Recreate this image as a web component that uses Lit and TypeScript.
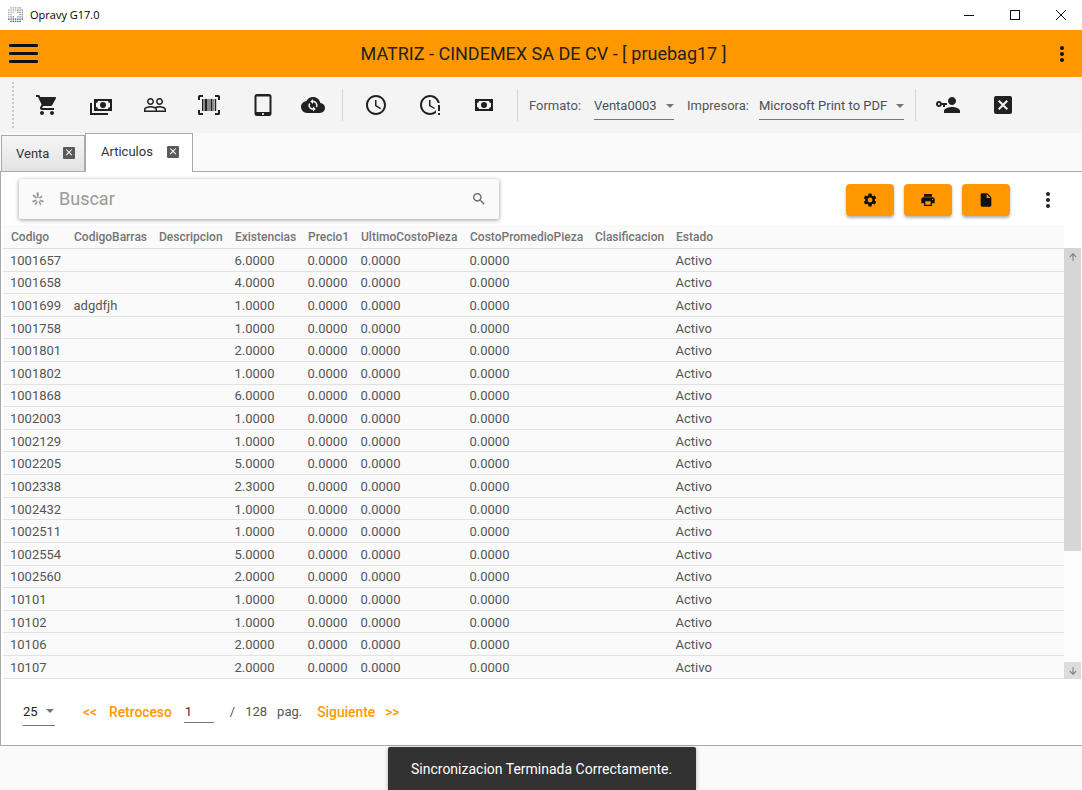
import { LitElement, html, css, svg } from "lit";
import { customElement } from "lit/decorators.js";

const P = {
  cart: "M7 18c-1.1 0-1.99.9-1.99 2S5.9 22 7 22s2-.9 2-2-.9-2-2-2zM1 2v2h2l3.6 7.59-1.35 2.45c-.16.28-.25.61-.25.96 0 1.1.9 2 2 2h12v-2H7.42c-.14 0-.25-.11-.25-.25l.03-.12.9-1.63h7.45c.75 0 1.41-.41 1.75-1.03l3.58-6.49c.08-.14.12-.31.12-.48 0-.55-.45-1-1-1H5.21l-.94-2H1zm16 16c-1.1 0-1.99.9-1.99 2s.89 2 1.99 2 2-.9 2-2-.9-2-2-2z",
  cashMulti: "M5,6H23V18H5V6M14,9A3,3 0 0,1 17,12A3,3 0 0,1 14,15A3,3 0 0,1 11,12A3,3 0 0,1 14,9M9,8A2,2 0 0,1 7,10V14A2,2 0 0,1 9,16H19A2,2 0 0,1 21,14V10A2,2 0 0,1 19,8H9M1,10H3V20H19V22H1V10Z",
  people: "M16.5 13c-1.2 0-3.07.34-4.5 1-1.43-.67-3.3-1-4.5-1C5.33 13 1 14.08 1 16.25V19h22v-2.75c0-2.17-4.33-3.25-6.5-3.25zm-4 4.5h-10v-1.25c0-.54 2.56-1.75 5-1.75s5 1.21 5 1.75v1.25zm9 0H14v-1.25c0-.46-.2-.86-.52-1.22.88-.3 1.96-.53 3.02-.53 2.44 0 5 1.21 5 1.75v1.25zM7.5 12c1.93 0 3.5-1.57 3.5-3.5S9.43 5 7.5 5 4 6.57 4 8.5 5.57 12 7.5 12zm0-5.5c1.1 0 2 .9 2 2s-.9 2-2 2-2-.9-2-2 .9-2 2-2zm9 5.5c1.93 0 3.5-1.57 3.5-3.5S18.43 5 16.5 5 13 6.57 13 8.5s1.57 3.5 3.5 3.5zm0-5.5c1.1 0 2 .9 2 2s-.9 2-2 2-2-.9-2-2 .9-2 2-2z",
  barcode: "M1 7V3.5A1.5 1.5 0 0 1 2.5 2H6v2H3v3H1zM18 2h3.5A1.5 1.5 0 0 1 23 3.5V7h-2V4h-3V2zM1 17h2v3h3v2H2.5A1.5 1.5 0 0 1 1 20.500V17zM21 17h2v3.500A1.500 1.500 0 0 1 21.500 22H18v-2h3v-3zM5 6h1.500v12H5zM7.500 6h3v12h-3zM11.500 6h1v12h-1zM13.500 6h2v12h-2zM16.500 6h.800v12h-.800zM18 6h1.200v12H18z",
  tablet: "M6 1h12a2.500 2.500 0 0 1 2.500 2.500v17A2.500 2.500 0 0 1 18 23H6a2.500 2.500 0 0 1-2.500-2.500v-17A2.500 2.500 0 0 1 6 1zM5.500 3.500v15.500h13V3.500zM12 19.900a1.100 1.100 0 1 0 0 2.200 1.100 1.100 0 0 0 0-2.200z",
  cloud: "M12 4c3.640 0 6.670 2.590 7.350 6.040C21.950 10.220 24 12.360 24 15a5 5 0 0 1-5 5H6a6 6 0 0 1-6-6c0-3.090 2.340-5.640 5.350-5.960C6.600 5.640 9.110 4 12 4z",
  sync: "M12 7.800V6l-2.700 2.500L12 11V9.300c1.700 0 3.100 1.300 3.100 3 0 .5-.1.900-.3 1.300l1.100 1c.4-.7.7-1.500.7-2.300 0-2.500-2.100-4.500-4.600-4.500zM12 15.300c-1.700 0-3.100-1.300-3.100-3 0-.5.100-.9.300-1.300l-1.100-1c-.4.700-.7 1.500-.7 2.300 0 2.500 2.100 4.500 4.600 4.500V18.500l2.700-2.500-2.700-2.500v1.800z",
  clock: "M11.99 2C6.470 2 2 6.480 2 12s4.470 10 9.990 10C17.520 22 22 17.520 22 12S17.520 2 11.990 2zM12 20c-4.420 0-8-3.580-8-8s3.580-8 8-8 8 3.580 8 8-3.580 8-8 8zm.5-13H11v6l5.250 3.150.75-1.230-4.500-2.670z",
  clockAlert: "M11,7V13L16.200,16.100L17,14.900L12.500,12.200V7H11M20,12V18H22V12H20M20,20V22H22V20H20M18,20C16.300,21.300 14.300,22 12,22C6.500,22 2,17.500 2,12C2,6.500 6.500,2 12,2C16.800,2 20.900,5.400 21.800,10H19.700C18.800,6.600 15.700,4 12,4C7.600,4 4,7.600 4,12C4,16.400 7.600,20 12,20C14.400,20 16.500,18.900 18,17.300V20Z",
  cash: "M3,6H21V18H3V6M12,9A3,3 0 0,1 15,12A3,3 0 0,1 12,15A3,3 0 0,1 9,12A3,3 0 0,1 12,9M7,8A2,2 0 0,1 5,10V14A2,2 0 0,1 7,16H17A2,2 0 0,1 19,14V10A2,2 0 0,1 17,8H7Z",
  key: "M11 10V12H9V14H7V12H5.800C5.400 13.200 4.300 14 3 14C1.300 14 0 12.700 0 11S1.300 8 3 8C4.300 8 5.400 8.800 5.800 10H11M3 10C2.400 10 2 10.400 2 11S2.400 12 3 12 4 11.600 4 11 3.600 10 3 10M16 14C18.700 14 24 15.300 24 18V20H8V18C8 15.300 13.300 14 16 14M16 12C13.800 12 12 10.200 12 8S13.800 4 16 4 20 5.800 20 8 18.200 12 16 12Z",
  closeBox: "M19,3H5A2,2 0 0,0 3,5V19A2,2 0 0,0 5,21H19A2,2 0 0,0 21,19V5A2,2 0 0,0 19,3M15.600,17L12,13.400L8.400,17L7,15.600L10.600,12L7,8.400L8.400,7L12,10.600L15.600,7L17,8.400L13.400,12L17,15.600L15.600,17Z",
  more: "M12 8c1.100 0 2-.9 2-2s-.9-2-2-2-2 .9-2 2 .9 2 2 2zm0 2c-1.100 0-2 .9-2 2s.9 2 2 2 2-.9 2-2-.9-2-2-2zm0 6c-1.100 0-2 .9-2 2s.9 2 2 2 2-.9 2-2-.9-2-2-2z",
  gear: "M19.140 12.940c.04-.3.06-.61.06-.94 0-.32-.02-.64-.07-.94l2.030-1.580c.18-.14.23-.41.12-.61l-1.920-3.320c-.12-.22-.37-.29-.59-.22l-2.390.96c-.5-.38-1.030-.7-1.620-.94l-.36-2.540c-.04-.24-.24-.41-.48-.41h-3.840c-.24 0-.43.17-.47.41l-.36 2.540c-.59.24-1.130.57-1.620.94l-2.390-.96c-.22-.08-.47 0-.59.22L2.740 8.870c-.12.21-.08.47.12.61l2.030 1.580c-.05.3-.09.63-.09.94s.02.64.07.94l-2.030 1.580c-.18.14-.23.41-.12.61l1.920 3.320c.12.22.37.29.59.22l2.390-.96c.5.38 1.030.7 1.620.94l.36 2.540c.05.24.24.41.48.41h3.840c.24 0 .44-.17.47-.41l.36-2.540c.59-.24 1.130-.56 1.620-.94l2.390.96c.22.08.47 0 .59-.22l1.920-3.320c.12-.22.07-.47-.12-.61l-2.010-1.580zM12 15.600c-1.980 0-3.600-1.620-3.600-3.600s1.620-3.600 3.600-3.600 3.600 1.620 3.600 3.600-1.620 3.600-3.600 3.600z",
  print: "M19 8H5c-1.660 0-3 1.340-3 3v6h4v4h12v-4h4v-6c0-1.660-1.340-3-3-3zm-3 11H8v-5h8v5zm3-7c-.55 0-1-.45-1-1s.45-1 1-1 1 .45 1 1-.45 1-1 1zm-1-9H6v4h12V3z",
  file: "M14 2H6c-1.100 0-1.990.9-1.990 2L4 20c0 1.100.89 2 1.990 2H18c1.100 0 2-.9 2-2V8l-6-6zm-1 7V3.500L18.500 9H13z",
  search: "M15.500 14h-.79l-.28-.27C15.410 12.590 16 11.110 16 9.500 16 5.910 13.090 3 9.500 3S3 5.910 3 9.500 5.910 16 9.500 16c1.610 0 3.090-.59 4.230-1.570l.27.28v.79l5 4.990L20.490 19l-4.990-5zm-6 0C7.010 14 5 11.990 5 9.500S7.010 5 9.500 5 14 7.010 14 9.500 11.990 14 9.500 14z",
  spark: "M9.500 1h4l-.5 9h-3zM2.500 6.500l2-2.500 5.500 5.500-1.500 2zM15 11.500l-1.500-2 5-3.500 1.500 2.500zM2 15l7-2 .7 2.500-6.500 3zM22 15l-.8 3.500-6.500-3 .8-2.500zM6 21l4-5.500 1.800 1.200-3 6zM13 16.700l1.800-1.200 3.200 5.500-2.500 2z",
  up: "M12 4l-7 7 1.500 1.500L11 8V20h2V8l4.500 4.500L19 11z",
  down: "M12 20l7-7-1.500-1.500L13 16V4h-2v12l-4.500-4.500L5 13z",
  x: "M18.300 5.710L16.890 4.300 12 9.170 7.110 4.300 5.700 5.710 10.590 10.600 5.700 15.500l1.410 1.400L12 12.030l4.890 4.870 1.410-1.400-4.890-4.900z",
};

const icon = (d: string, size = 24) => html`<svg class="i" width=${size} height=${size} viewBox="0 0 24 24" fill-rule="evenodd" fill="currentColor" aria-hidden="true">${svg`<path d=${d}></path>`}</svg>`;

const cloudIcon = html`<svg class="i" width="24" height="24" viewBox="0 0 24 24" fill-rule="evenodd" aria-hidden="true">${svg`<path fill="currentColor" d=${P.cloud}></path><path fill="#f5f5f5" d=${P.sync}></path>`}</svg>`;

const logoDots = () => {
  const dots = [];
  for (let r = 0; r < 7; r++) {
    for (let c = 0; c < 7; c++) {
      const dx = c - 3, dy = r - 3;
      const d = Math.sqrt(dx * dx + dy * dy);
      if (d > 3.7 || d < 1.4) continue;
      const col = r + c < 5 ? "#a9b4bd" : r > 4 ? "#5d7183" : "#8c9aa6";
      dots.push(svg`<circle cx=${1.6 + c * 2} cy=${1.6 + r * 2} r="0.750" fill=${col}></circle>`);
    }
  }
  return dots;
};

const COLS = ["Codigo", "CodigoBarras", "Descripcion", "Existencias", "Precio1", "UltimoCostoPieza", "CostoPromedioPieza", "Clasificacion", "Estado"];
const ROWS: [string, string, string][] = [
  ["1001657", "", "6.0000"], ["1001658", "", "4.0000"], ["1001699", "adgdfjh", "1.0000"], ["1001758", "", "1.0000"],
  ["1001801", "", "2.0000"], ["1001802", "", "1.0000"], ["1001868", "", "6.0000"], ["1002003", "", "1.0000"],
  ["1002129", "", "1.0000"], ["1002205", "", "5.0000"], ["1002338", "", "2.3000"], ["1002432", "", "1.0000"],
  ["1002511", "", "1.0000"], ["1002554", "", "5.0000"], ["1002560", "", "2.0000"], ["10101", "", "1.0000"],
  ["10102", "", "1.0000"], ["10106", "", "2.0000"], ["10107", "", "2.0000"],
];

@customElement("app-root")
export class AppRoot extends LitElement {
  static styles = css`
    :host { display: block; width: 1082px; height: 790px; overflow: hidden; position: relative; background: #fafafa; font-family: Roboto, sans-serif; font-size: 13px; color: #444; }
    .i { display: block; flex: none; }
    .titlebar { height: 30px; background: #fff; display: flex; align-items: center; padding-left: 7px; }
    .logo { margin-top: -1px; }
    .apptitle { font-family: "Open Sans", sans-serif; font-size: 11px; color: #000; margin: -2px 0 0 5px; flex: 1; }
    .win { width: 46px; height: 30px; display: flex; align-items: center; justify-content: center; color: #111; position: relative; left: 2px; }
    .appbar { height: 47px; background: #ff9800; display: flex; align-items: center; color: #1a1a1a; }
    .burger { width: 29px; margin-left: 9px; display: flex; flex-direction: column; gap: 5px; }
    .burger span { height: 3px; background: #111; border-radius: 1px; }
    .apphead { flex: 1; text-align: center; font-size: 18px; margin: -1px 1px 0 0; color: #212121; }
    .appmore { margin-right: 8px; color: #111; }
    .toolbar { height: 56px; background: #f4f4f4; display: flex; align-items: center; padding-left: 12px; }
    .grip { width: 3px; height: 46px; margin-right: 3px; border-left: 2px dotted #c8c8c8; }
    .tb { width: 54px; height: 40px; display: flex; align-items: center; justify-content: center; color: #212121; }
    .tb.small { width: 50px; }
    .tb.shift { margin-left: -2px; }
    .tb.wide { width: 55px; }
    .sep { width: 1px; height: 32px; background: #d4d4d4; margin: 0 6px; }
    .sep.a { margin: 0 6px 0 4px; }
    .sep.b { margin: 0 11px 0 6px; }
    .sep.c { margin: 0 5px 0 11px; }
    .lab { font-size: 13px; color: #555; }
    .sel { display: flex; align-items: center; justify-content: space-between; height: 28px; border-bottom: 1px solid #757575; color: #4a4f55; font-size: 13px; box-sizing: border-box; margin-top: 2px; }
    .sel.f { width: 80px; margin: 2px 13px 0 13px; }
    .sel.p { width: 145px; margin: 2px 0 0 10px; }
    .sel .arrow { margin-right: 0; }
    .arrow { width: 0; height: 0; border-left: 4px solid transparent; border-right: 4px solid transparent; border-top: 4px solid #757575; margin-right: 1px; }
    .tabs { height: 38px; display: flex; align-items: flex-end; padding-left: 1px; position: relative; z-index: 1; }
    .tab { display: flex; align-items: center; box-sizing: border-box; border: 1px solid #aaa; border-bottom: none; font-size: 13px; color: #333; }
    .tab .x { background: #5a5a5a; color: #fff; width: 12px; height: 12px; border-radius: 1px; display: flex; align-items: center; justify-content: center; }
    .tab.off { width: 84px; height: 36px; background: linear-gradient(#f6f6f6, #e3e3e3); padding: 0 0 1px 14px; }
    .tab.off .x { margin-left: 14px; }
    .tab.on { width: 108px; height: 39px; background: #fff; padding: 0 0 3px 15px; margin-bottom: -1px; }
    .tab.on .x { margin-left: 14px; }
    .panel { height: 575px; box-sizing: border-box; border: 1px solid #aaa; border-width: 1px 0 1px 1px; background: #fff; display: flex; flex-direction: column; padding-left: 2px; }
    .tools { height: 53px; display: flex; align-items: flex-start; flex: none; }
    .search { width: 480px; height: 40px; margin: 7px 0 0 16px; background: #fafafa; border-radius: 2px; box-shadow: 0 1px 4px rgba(0,0,0,.4); display: flex; align-items: center; padding: 0 12px; box-sizing: border-box; color: #999; font-size: 18px; }
    .search .ph { flex: 1; margin-left: 14px; margin-top: -2px; }
    .search .mag { color: #666; }
    .btn { width: 48px; height: 32px; background: #ff9800; border-radius: 4px; box-shadow: 0 2px 3px rgba(0,0,0,.3); display: flex; align-items: center; justify-content: center; color: #111; margin: 12px 10px 0 0; }
    .btn.first { margin-left: 347px; }
    .more { margin: 16px 0 0 16px; color: #222; }
    .tablewrap { display: flex; height: 454px; flex: none; }
    .table { width: 1061px; flex: none; background: #fafafa; }
    .row { display: grid; grid-template-columns: 63px 85px 76px 73px 53px 109px 125px 81px 1fr; box-sizing: border-box; align-items: center; }
    .row.head { height: 24px; font-size: 12px; font-weight: 500; color: #757575; border-bottom: 1px solid #ddd; padding-left: 8px; }
    .row.body { height: 22.620px; font-size: 13px; color: #555; border-bottom: 1px solid #e2e2e2; padding: 1px 0 0 7px; grid-template-columns: 63.500px 85px 76px 73px 53px 109px 125px 81px 1fr; }
    .sb { width: 17px; margin-top: 23px; height: 431px; background: #fcfcfc; display: flex; flex-direction: column; color: #7a7a7a; }
    .sb .thumb { height: 303px; background: #d6d6d6; flex: none; }
    .sb .end { flex: none; height: 17px; display: flex; align-items: center; justify-content: center; }
    .sb .spacer { flex: 1; }
    .sb .end.bot { background: #dcdcdc; }
    .pager { flex: 1; display: flex; align-items: center; font-size: 13px; color: #555; padding: 0 0 1px 20px; }
    .psel { width: 32px; height: 29px; display: flex; align-items: center; justify-content: space-between; border-bottom: 1px solid #757575; color: #222; box-sizing: border-box; }
    .nav { color: #ff9800; font-weight: 500; font-size: 13.800px; }
    .pin { width: 30px; height: 24px; border-bottom: 1px solid #757575; box-sizing: border-box; margin: -2px 0 0 12px; padding: 2px 0 0 1px; color: #333; display: flex; align-items: center; }
    .toast { position: absolute; left: 388px; bottom: 0; width: 308px; height: 43px; background: #323232; color: #fff; font-size: 14px; display: flex; align-items: center; padding-left: 23px; box-sizing: border-box; border-radius: 2px 2px 0 0; box-shadow: 0 1px 4px rgba(0,0,0,.3); }
    .ml10 { margin-left: 10px; }
    .ml12 { margin-left: 12px; }
    .ml15 { margin-left: 15px; }
    .ml16 { margin-left: 16px; }
    .ml28 { margin-left: 28px; }
  `;

  render() {
    return html`
      <div class="titlebar">
        <svg class="logo" width="18" height="18" viewBox="0 0 16 16" aria-hidden="true">${logoDots()}</svg>
        <div class="apptitle">Opravy G17.0</div>
        <div class="win"><svg width="12" height="12" viewBox="0 0 12 12" fill="none" stroke="#111">${svg`<path d="M1 6.500h10"></path>`}</svg></div>
        <div class="win"><svg width="12" height="12" viewBox="0 0 12 12" fill="none" stroke="#111">${svg`<rect x="1.500" y="1.500" width="9" height="9"></rect>`}</svg></div>
        <div class="win"><svg width="12" height="12" viewBox="0 0 12 12" fill="none" stroke="#111">${svg`<path d="M1 1l10 10M11 1L1 11"></path>`}</svg></div>
      </div>
      <div class="appbar">
        <div class="burger"><span></span><span></span><span></span></div>
        <div class="apphead">MATRIZ - CINDEMEX SA DE CV - [ pruebag17 ]</div>
        <div class="appmore">${icon(P.more)}</div>
      </div>
      <div class="toolbar">
        <div class="grip"></div>
        <div class="tb">${icon(P.cart)}</div>
        <div class="tb">${icon(P.cashMulti)}</div>
        <div class="tb">${icon(P.people)}</div>
        <div class="tb">${icon(P.barcode)}</div>
        <div class="tb">${icon(P.tablet)}</div>
        <div class="tb small shift">${cloudIcon}</div>
        <div class="sep a"></div>
        <div class="tb">${icon(P.clock)}</div>
        <div class="tb">${icon(P.clockAlert)}</div>
        <div class="tb">${icon(P.cash)}</div>
        <div class="sep b"></div>
        <div class="lab">Formato:</div>
        <div class="sel f"><span>Venta0003</span><span class="arrow"></span></div>
        <div class="lab">Impresora:</div>
        <div class="sel p"><span>Microsoft Print to PDF</span><span class="arrow"></span></div>
        <div class="sep c"></div>
        <div class="tb wide">${icon(P.key)}</div>
        <div class="tb">${icon(P.closeBox)}</div>
      </div>
      <div class="tabs">
        <div class="tab off"><span>Venta</span><span class="x">${icon(P.x, 12)}</span></div>
        <div class="tab on"><span>Articulos</span><span class="x">${icon(P.x, 12)}</span></div>
      </div>
      <div class="panel">
        <div class="tools">
          <div class="search">${icon(P.spark, 14)}<span class="ph">Buscar</span><span class="mag">${icon(P.search, 16)}</span></div>
          <div class="btn first">${icon(P.gear, 16)}</div>
          <div class="btn">${icon(P.print, 16)}</div>
          <div class="btn">${icon(P.file, 16)}</div>
          <div class="more">${icon(P.more)}</div>
        </div>
        <div class="tablewrap">
          <div class="table">
            <div class="row head">${COLS.map((c) => html`<span>${c}</span>`)}</div>
            ${ROWS.map((r) => html`<div class="row body"><span>${r[0]}</span><span>${r[1]}</span><span></span><span>${r[2]}</span><span>0.0000</span><span>0.0000</span><span>0.0000</span><span></span><span>Activo</span></div>`)}
          </div>
          <div class="sb">
            <div class="thumb"><div class="end">${icon(P.up, 12)}</div></div>
            <div class="spacer"></div>
            <div class="end bot">${icon(P.down, 12)}</div>
          </div>
        </div>
        <div class="pager">
          <div class="psel"><span>25</span><span class="arrow"></span></div>
          <span class="nav ml28">&lt;&lt;</span>
          <span class="nav ml12">Retroceso</span>
          <div class="pin">1</div>
          <span class="ml16">/</span>
          <span class="ml10">128</span>
          <span class="ml10">pag.</span>
          <span class="nav ml15">Siguiente</span>
          <span class="nav ml10">&gt;&gt;</span>
        </div>
      </div>
      <div class="toast">Sincronizacion Terminada Correctamente.</div>
    `;
  }
}
